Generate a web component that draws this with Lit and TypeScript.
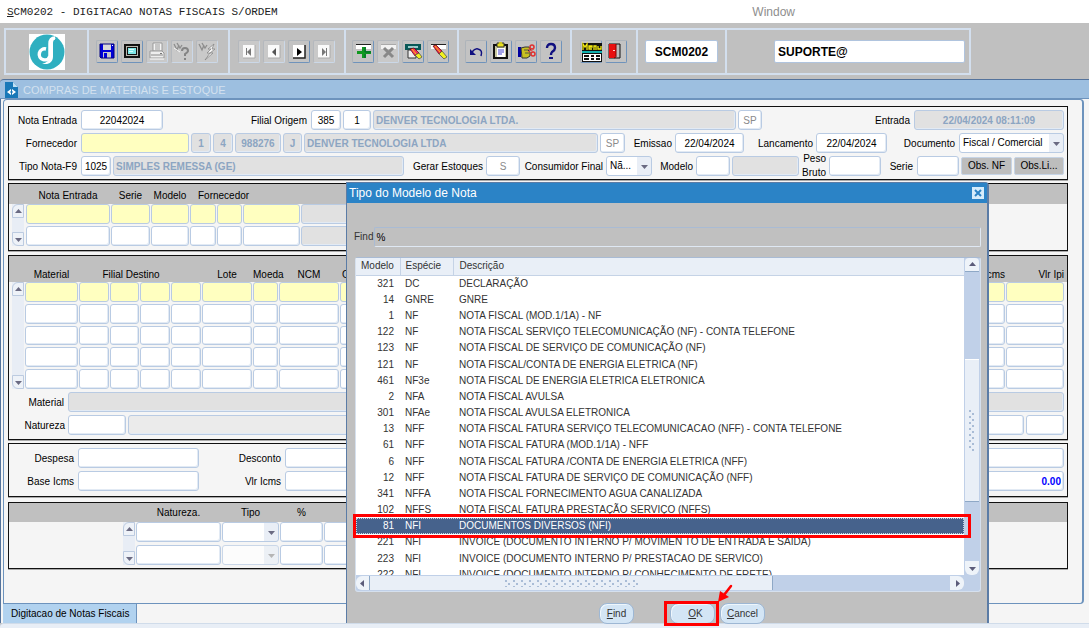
import { LitElement, html, svg, css, nothing, TemplateResult } from "lit";
import { customElement, property } from "lit/decorators.js";
import { classMap } from "lit/directives/class-map.js";

const icons: Record<string, TemplateResult> = {
  save: svg`<path d="M4 4h14v14H5l-1-1z" fill="#0000d8"/><path d="M7 4h8v6H7z" fill="#d8d8d8"/><path d="M16 5h1v1h-1z" fill="#fff"/><path d="M7 12h8v6H7z" fill="#c8c8c8"/><path d="M8 13h3v5H8z" fill="#0000d8"/><path d="M4 4h14v14H5l-1-1z" fill="none" stroke="#000080"/>`,
  screen: svg`<path d="M3 4h16v14H3z" fill="#111"/><path d="M5 6h12v10H5z" fill="#b8b8b0"/><path d="M6 7h10v8H6z" fill="#111"/><path d="M7 8h8v6H7z" fill="#7fe6e6"/><path d="M8 9h5v1H8zM8 11h4v1H8z" fill="#d8ffff"/>`,
  print: svg`<path d="M7 3h9v8H7z" fill="#f4f4f4" stroke="#999"/><path d="M9 5h5M9 7h5M9 9h5" stroke="#999"/><path d="M4 11h12l2 2v5H4z" fill="#eee" stroke="#999"/><path d="M5 15h12" stroke="#888"/><path d="M14 13h2v1h-2z" fill="#777"/><path d="M4 19h14" stroke="#fff"/>`,
  query: svg`<path d="M3 4l3 6 2-5M6 3l3 5 2-3" fill="none" stroke="#8d8d8d" stroke-width="1.3"/><path d="M3 8l6 4" stroke="#f6f6f6"/><path d="M11 11q0-3 3-3t3 3q0 1-3 3v2M14 18v2" fill="none" stroke="#858585" stroke-width="2"/>`,
  flash: svg`<path d="M3 4l3 6 2-5M6 3l3 5 2-3" fill="none" stroke="#8d8d8d" stroke-width="1.3"/><path d="M18 4l-6 5h3l-4 4h3l-5 7 8-7h-3l5-4h-3z" fill="#f4f4f4" stroke="#888" stroke-width=".8"/>`,
  first: svg`<path d="M5 5h12v13H5z" fill="#fafafa"/><path d="M5 18h12V5" fill="none" stroke="#aaa"/><path d="M8.500 8v7" stroke="#777"/><path d="M13 8v8l-4-4z" fill="#777"/>`,
  prev: svg`<path d="M5 5h12v13H5z" fill="#fafafa"/><path d="M5 18h12V5" fill="none" stroke="#aaa"/><path d="M13 8v8l-4-4z" fill="#555"/>`,
  next: svg`<path d="M5 5h12v13H5z" fill="#fff"/><path d="M5 18h12V5" fill="none" stroke="#222" stroke-width="1.5"/><path d="M9 8v8l5-4z" fill="#000"/>`,
  last: svg`<path d="M5 5h12v13H5z" fill="#fafafa"/><path d="M5 18h12V5" fill="none" stroke="#aaa"/><path d="M13.500 8v8" stroke="#777"/><path d="M9 8v8l4-4z" fill="#777"/>`,
  add: svg`<path d="M4 4h15v5H4z" fill="#fff"/><path d="M4 4h15v1H4z" fill="#222"/><path d="M10 7h4v4h5v3h-5v4h-4v-4H5v-3h5z" fill="#109820"/><path d="M13 7v5h6M13 14v4" fill="none" stroke="#063"/>`,
  remove: svg`<path d="M4 4h15v5H4z" fill="#f2f2f2"/><path d="M4 4h15v1H4z" fill="#aaa"/><path d="M7 8l9 9M16 8l-9 9" stroke="#888" stroke-width="3"/>`,
  clearquery: svg`<path d="M3 4h16v6H3z" fill="#075858"/><path d="M6 6h10v2H6z" fill="#9cc"/><path d="M6 10h8v8H6z" fill="#eee" stroke="#333"/><path d="M8 9l4-1 5 5-4 3z" fill="#f03060" stroke="#600" stroke-width=".7"/><path d="M10 9l4 5" stroke="#fc0"/><path d="M13 15l4-2 3 4-3 2z" fill="#f0f020" stroke="#444" stroke-width=".7"/>`,
  clear: svg`<path d="M4 4h15v5H4z" fill="#fff"/><path d="M4 4h15v1H4z" fill="#222"/><path d="M6 6l3-1 6 6-3 3z" fill="#e82850" stroke="#600" stroke-width=".7"/><path d="M8 6l5 6" stroke="#fc0"/><path d="M12 14l3-3 5 6-3 2z" fill="#f0f020" stroke="#444" stroke-width=".7"/>`,
  undo: svg`<path d="M7 12q3-4 6-3 5 1 3 7" fill="none" stroke="#101080" stroke-width="1.5"/><path d="M5 9v6h6z" fill="#101080"/>`,
  clip: svg`<path d="M4 5h13v13H4z" fill="#c8c8a0" stroke="#111" stroke-width="2"/><path d="M7 8h8v9H7z" fill="#fff"/><path d="M8 10h6M8 12h6M8 14h4" stroke="#4444d0"/><path d="M7 3h7v4H7z" fill="#e8e020" stroke="#333"/><path d="M9 2h3v2H9z" fill="#d0c820"/>`,
  hand: svg`<path d="M3 7h3v10H3z" fill="#0000a0"/><path d="M6 8l4-1h4l2 3h-3l2 2v4l-3 2H7z" fill="#c8c020" stroke="#333"/><path d="M9 10h4M10 13h4" stroke="#554"/><circle cx="17" cy="7" r="2" fill="none" stroke="#e03030" stroke-width="1.5"/><circle cx="18" cy="14" r="2" fill="none" stroke="#e03030" stroke-width="1.5"/><path d="M13 9l6 3M13 12l6-3" stroke="#e05050"/>`,
  help: svg`<path d="M7 8q0-4 4-4t4 4q0 2-3 4-1 1-1 3" fill="none" stroke="#101080" stroke-width="2.4"/><path d="M9 17h4v2H9z" fill="#101080"/>`,
  menu: svg`<path d="M2 10h20v12H2z" fill="#111"/><path d="M2 11h20v2H2z" fill="#10b0b0"/><path d="M3 14h18v7H3z" fill="#fff"/><path d="M4 16h5M11 16h3M16 16h4M4 19h5M11 19h3M16 19h4" stroke="#111" stroke-width="2"/><path d="M2 3h20v7H2z" fill="#111"/><path d="M3 10V4l2 3 2-3v6M12 9H9V6h3v1H9M14 10V6h2v4M18 6v3h3V6" fill="none" stroke="#f4ec10" stroke-width="1.3"/>`,
  exit: svg`<path d="M4 4h11v14H4z" fill="#bbb" stroke="#111"/><path d="M4 4h7v12l-2 2H4z" fill="#e81010"/><path d="M11 4v13l-2 1" fill="none" stroke="#800"/><path d="M8 10h2v1H8z" fill="#fcc"/>`,
};

@customElement("tool-button")
export class ToolButton extends LitElement {
  @property() icon = "";
  @property() label = "";
  @property({ type: Boolean }) off = false;

  static styles = css`
    :host { display: block; width: 22px; height: 23px; }
    button {
      display: block; box-sizing: border-box; width: 22px; height: 23px; padding: 0; margin: 0;
      background: #c3c3c3; border: 1px solid;
      border-color: #aeb4ba #6f93bb #6f93bb #aeb4ba; border-radius: 2px;
    }
    button.off { border-color: #b4b8bd #cbd8e8 #cbd8e8 #b4b8bd; background: #c9c9c9; }
    svg { display: block; width: 22px; height: 23px; margin: -1px; }
  `;

  render() {
    return html`<button class=${classMap({ off: this.off })} ?disabled=${this.off} aria-label=${this.label}>
      <svg viewBox="0 0 22 23" aria-hidden="true">${icons[this.icon]}</svg>
    </button>`;
  }
}

type Tool = [string, string, boolean?];
const toolGroups: { cls: string; tools: Tool[] }[] = [
  { cls: "file", tools: [["save", "Salvar"], ["screen", "Tela"], ["print", "Imprimir", true], ["query", "Consultar", true], ["flash", "Executar consulta", true]] },
  { cls: "nav", tools: [["first", "Primeiro", true], ["prev", "Anterior", true], ["next", "Proximo"], ["last", "Ultimo", true]] },
  { cls: "", tools: [["add", "Inserir"], ["remove", "Excluir", true], ["clearquery", "Limpar bloco"], ["clear", "Limpar registro"]] },
  { cls: "", tools: [["undo", "Desfazer"], ["clip", "Lista"], ["hand", "Editar"], ["help", "Ajuda"]] },
  { cls: "nav", tools: [["menu", "Menu"], ["exit", "Sair"]] },
];

const models: [string, string, string][] = [
  ["321", "DC", "DECLARAÇÃO"],
  ["14", "GNRE", "GNRE"],
  ["1", "NF", "NOTA FISCAL (MOD.1/1A) - NF"],
  ["122", "NF", "NOTA FISCAL SERVIÇO TELECOMUNICAÇÃO (NF) - CONTA TELEFONE"],
  ["123", "NF", "NOTA FISCAL DE SERVIÇO DE COMUNICAÇÃO (NF)"],
  ["121", "NF", "NOTA FISCAL/CONTA DE ENERGIA ELETRICA (NF)"],
  ["461", "NF3e", "NOTA FISCAL DE ENERGIA ELETRICA ELETRONICA"],
  ["2", "NFA", "NOTA FISCAL AVULSA"],
  ["301", "NFAe", "NOTA FISCAL AVULSA ELETRONICA"],
  ["13", "NFF", "NOTA FISCAL FATURA SERVIÇO TELECOMUNICACAO (NFF) - CONTA TELEFONE"],
  ["61", "NFF", "NOTA FISCAL FATURA (MOD.1/1A) - NFF"],
  ["6", "NFF", "NOTA FISCAL FATURA /CONTA DE ENERGIA ELETRICA (NFF)"],
  ["12", "NFF", "NOTA FISCAL FATURA DE SERVIÇO DE COMUNICAÇÃO (NFF)"],
  ["341", "NFFA", "NOTA FISCAL FORNECIMENTO AGUA CANALIZADA"],
  ["102", "NFFS", "NOTA FISCAL FATURA PRESTAÇÃO SERVIÇO (NFFS)"],
  ["81", "NFI", "DOCUMENTOS DIVERSOS (NFI)"],
  ["221", "NFI", "INVOICE (DOCUMENTO INTERNO P/ MOVIMEN TO DE ENTRADA E SAIDA)"],
  ["223", "NFI", "INVOICE (DOCUMENTO INTERNO P/ PRESTACAO DE SERVICO)"],
  ["222", "NFI", "INVOICE (DOCUMENTO INTERNO P/ CONHECIMENTO DE FRETE)"],
];

const arrow = (dir: "up" | "down" | "left" | "right") => {
  const d = { up: "M1 6h7L4.500 2z", down: "M1 3h7L4.500 7z", left: "M6 1v7L2 4.500z", right: "M3 1v7L7 4.500z" }[dir];
  return html`<svg class="arrow" viewBox="0 0 9 9" aria-hidden="true"><path d=${d} fill="currentColor" /></svg>`;
};

@customElement("app-root")
export class AppRoot extends LitElement {
  static styles = css`
    * { box-sizing: border-box; }
    :host {
      display: flex; flex-direction: column; min-height: 100vh; overflow: hidden;
      font: 10px/14px "Liberation Sans", Arial, sans-serif; color: #000; background: #c0c0c0;
    }
    input, select, button { font: inherit; color: inherit; margin: 0; min-width: 0; }

    .menubar { display: flex; justify-content: space-between; height: 23px; padding: 0 294px 0 7px; background: #fff; line-height: 24px; flex: none; }
    .menubar .name { font-family: "Liberation Mono", monospace; font-size: 11px; color: #222; }
    .menubar .window { font-size: 12px; color: #8e8e8e; }

    .toolbar { flex: none; height: 56px; padding: 5px 4px 4px; }
    .groups { display: inline-flex; height: 47px; border: 2px solid #d3dfee; }
    .group { display: flex; align-items: center; justify-content: center; gap: 3px; padding: 0 8px 0 6px; border-left: 2px solid #d3dfee; }
    .group.brand { border-left: 0; width: 81px; padding: 0; }
    .brand svg { width: 36px; height: 36px; display: block; }
    .group.file { padding: 0 10px 0 7px; }
    .group.nav { padding: 0 9px 0 8px; }
    .group.program { padding: 0 7px; }
    .group.user { width: 244px; justify-content: flex-end; padding: 0 4px; }
    .group input { height: 23px; border: 1px solid #b0c4de; border-radius: 2px; font-size: 12px; font-weight: bold; background: #fff; padding: 0 3px; }
    .group .code { width: 73px; text-align: center; }
    .group .login { width: 191px; }

    .titlebar { flex: none; display: flex; align-items: center; gap: 5px; height: 20px; padding: 2px 5px 0; background: #9dbfe0; border-top: 1px solid #54739c; border-bottom: 1px solid #6d93bd; border-top-left-radius: 4px; color: #d3e1ef; font-size: 11px; }
    .titlebar svg { width: 13px; height: 16px; }

    .work { position: relative; flex: 1; display: flex; flex-direction: column; background: #f5f5f5; border-left: 1px solid #54739c; padding: 0 5px 0 2px; }
    .canvas { flex: 1; display: flex; flex-direction: column; border: 1px solid #6d93bd; border-width: 1px 2px 1px 1px; border-radius: 4px 4px 4px 0; padding: 6px 14px 0 4px; }
    .panel { border: 1px solid #111; background: #f5f5f5; box-shadow: 0 1px 0 #aaa; }
    .panel.note { padding: 3px 3px 2px 0; height: 74px; }
    .panel.invoices { margin-top: 3px; height: 68px; }
    .panel.items { margin-top: 4px; height: 185px; }
    .panel.totals { margin-top: 3px; height: 54px; padding: 4px 3px 0 0; }
    .panel.natures { margin-top: 5px; height: 67px; }

    .row { display: grid; column-gap: 2px; height: 20px; margin-bottom: 3px; }
    .row label { text-align: right; padding-right: 2px; line-height: 21px; white-space: nowrap; }
    .row .tight { padding-right: 1px; }
    .row .two { white-space: normal; line-height: 14px; margin: -4px 0; }
    .r1 { grid-template-columns: 70px 82px 144px 30px 28px 1fr 24px 148px 150px; }
    .r2 { grid-template-columns: 70px 108px 20px 20px 46px 19px 1fr 25px 46px 69px 68px 71px 68px 105px; }
    .r3 { grid-template-columns: 70px 30px 1fr 78px 34px 82px 46px 40px 34px 67px 26px 52px 32px 42px 51px 50px; }
    .r4 { grid-template-columns: 57px 1fr; padding-right: 3px; margin-top: 3px; }
    .r5 { grid-template-columns: 57px 58px 3fr 2fr 38px; padding-right: 3px; }
    .r6 { grid-template-columns: 67px 121px 82px 150px 1fr 150px; }

    .f { width: 100%; height: 20px; border: 1px solid #b9cbe3; border-radius: 3px; background: #fff; padding: 0 2px; outline: 0; box-shadow: inset -1px -1px 0 #e2eaf4; text-overflow: ellipsis; }
    .f.c { text-align: center; }
    .f.y { background: #ffffc0; box-shadow: none; }
    .f.g { background: #e1e1e1; color: #8ca5c2; font-weight: bold; }
    .f.l { background: #ebebeb; }
    .f.dim { color: #8a8a8a; text-align: center; }
    .f.money { text-align: right; color: #00f; font-weight: bold; }
    .sel { position: relative; display: block; width: 100%; height: 20px; }
    .sel select { appearance: none; width: 100%; height: 20px; border: 1px solid #b9cbe3; border-radius: 3px; background: linear-gradient(#e9eef6, #e9eef6) right / 14px 100% no-repeat #fff; padding: 0 14px 0 3px; }
    .sel .arrow { position: absolute; right: 3px; top: 6px; pointer-events: none; color: #6a6a82; }
    .sel.off .arrow { color: #b5b5b5; }
    .arrow { width: 9px; height: 9px; display: block; }
    .btn { height: 18px; margin-top: 1px; padding: 0; background: #bdbdbd; border: 1px solid #c6d4e6; border-radius: 2px; }

    .head { background: #c0c0c0; display: grid; column-gap: 1px; align-items: end; text-align: center; white-space: nowrap; }
    .invoices .head, .invoices .cells { grid-template-columns: 84px 39px 38px 26px 25px 57px 1fr; }
    .invoices .head { height: 20px; padding: 0 100px 1px 17px; }
    .invoices .owner { grid-column: 4 / 7; text-align: left; padding-left: 8px; }
    .block { display: flex; gap: 2px; padding: 0 3px; }
    .cells { flex: 1; display: grid; column-gap: 1px; row-gap: 2px; }
    .invoices .block { height: 42px; padding-right: 100px; }
    .items .head, .items .cells { grid-template-columns: 53px 30px 29px 30px 30px 50px 25px 60px repeat(10, 1fr) 58px; }
    .items .head { height: 26px; padding: 0 3px 0 16px; }
    .items .branch { grid-column: 2 / 6; padding-right: 18px; }
    .items .left { text-align: left; padding-left: 2px; }
    .items .right { text-align: right; }
    .items .block { height: 107px; gap: 1px; }
    .items .cells .f { height: 100%; }
    .items .cells { grid-template-rows: repeat(5, 1fr); }
    .natures .head, .natures .cells { grid-template-columns: 85px 57px 43px 1fr; }
    .natures .head { height: 19px; padding: 0 100px 2px 127px; }
    .natures .block { height: 43px; padding-left: 114px; padding-right: 100px; gap: 1px; }

    .vbar { flex: none; width: 12px; display: flex; flex-direction: column; justify-content: space-between; background: #e8edf5; }
    .vbar button { display: grid; place-items: center; width: 12px; height: 14px; padding: 0; border: 1px solid #bccbe0; background: #eef2f8; color: #6a6a82; }
    .vbar button:first-child { border-radius: 6px 0 0 0; }
    .vbar button:last-child { border-radius: 0 0 0 6px; }

    .tabs { flex: none; height: 19px; display: flex; }
    .tab { padding: 0 7px 0 8px; height: 19px; border: 0; border-right: 1px solid #6d93bd; background: #b1d2ef; white-space: nowrap; }
    .status { flex: none; height: 5px; background: #e8eef6; border-top: 1px solid #d0dcea; border-radius: 4px 0 0 0; }

    .dialog { position: absolute; left: 345px; top: 83px; bottom: 0; width: 643px; display: flex; flex-direction: column; background: #c0c0c0; border: 1px solid #5b7ca6; border-width: 1px 2px 0 1px; border-radius: 0 4px 0 0; color: #333; }
    .caption { flex: none; display: flex; align-items: center; justify-content: space-between; height: 20px; padding: 0 3px 0 2px; background: #2b83c6; color: #fff; font-size: 12px; }
    .close { width: 12px; height: 12px; padding: 0; border: 0; background: #d6ecfb; display: block; }
    .close svg { display: block; width: 12px; height: 12px; }
    .find { display: flex; align-items: center; margin: 24px 6px 0 7px; gap: 1px; }
    .find input { flex: 1; height: 20px; border: 1px solid #a9bbd4; border-bottom-color: #dfe8f3; border-right-color: #dfe8f3; border-radius: 2px; background: #c0c0c0; padding: 0 1px; color: #000; }
    .list { position: relative; margin: 10px 6px 0 8px; height: 335px; display: grid; grid-template: 1fr 16px / 1fr 16px; border: 1px solid #d5e0ee; border-top-color: #a9bbd4; border-radius: 3px; background: #c0d0e8; }
    .view { overflow: hidden; background: #fff; }
    table { border-collapse: collapse; width: 100%; height: 325px; table-layout: fixed; }
    th, td { padding: 0; font-weight: normal; text-align: left; white-space: nowrap; line-height: 14px; }
    th { height: 17px; background: #e9eff7; border-right: 1px solid #c5d3e6; border-bottom: 1px solid #c5d3e6; padding-left: 5px; }
    th:last-child { border-right: 0; }
    .cm { width: 44px; }
    .ce { width: 53px; }
    td.n { text-align: right; padding-right: 6px; }
    td.s { padding-left: 5px; }
    td.d, th.d { padding-left: 6px; }
    tr.on { background: #46628c; color: #fff; outline: 1px dotted #c8d4e4; outline-offset: -1px; }
    .vs, .hs { display: flex; justify-content: space-between; }
    .vs { flex-direction: column; padding: 0 1px; }
    .vs .gap { flex: 88; }
    .vs .thumb { flex: 142; border-bottom: 1px solid #8ea8c6; border-top: 1px solid #fff; }
    .vs .rest { flex: 60; }
    .hs { padding: 1px 0; }
    .hs .thumb { flex: 403; border-right: 1px solid #8ea8c6; }
    .hs .rest { flex: 178; }
    .thumb { background: #e9eff7; display: grid; place-items: center; }
    .grip { background: radial-gradient(circle at 2px 2px, #a9bcd6 1px, transparent 1px) 0 0 / 8px 6px, radial-gradient(circle at 5px 5px, #a9bcd6 1px, transparent 1px) 0 0 / 8px 6px; }
    .vs .grip { width: 8px; height: 42px; }
    .hs .grip { width: 134px; height: 8px; }
    .list .sb { flex: none; display: grid; place-items: center; width: 14px; height: 14px; padding: 0; border: 0; border-bottom: 1px solid #8ea8c6; background: #eef3f9; color: #5c5c7a; border-radius: 4px 4px 0 0; }
    .list .sb.dn { border-bottom: 0; border-radius: 0 0 6px 6px; }
    .list .sb.lf { border-bottom: 0; border-right: 1px solid #8ea8c6; border-radius: 6px 0 0 6px; }
    .list .sb.rt { border-bottom: 0; border-radius: 0 6px 6px 0; }
    .mark { position: absolute; border: 3px solid #f00; pointer-events: none; }
    .list .mark { left: -3px; right: 9px; top: 256px; height: 24px; }
    .actions { display: flex; margin-top: 11px; padding-left: 252px; }
    .actions button { height: 21px; padding: 0; border: 1px solid #9db7d4; border-radius: 8px; background: #d3e5f5; box-shadow: inset 1px 1px 0 #eef6fc; }
    .b1 { width: 35px; }
    .ok { position: relative; margin: 0 5px 0 36px; }
    .ok button { width: 45px; padding-left: 6px; }
    .ok .mark { left: -6px; top: -2px; width: 55px; height: 25px; }
    .ok .pointer { position: absolute; left: 46px; top: -20px; width: 20px; height: 20px; pointer-events: none; }
    .b3 { width: 45px; }
  `;

  private field(cls: string, value = "", id = "", name = "Campo") {
    return html`<input class="f ${cls}" id=${id || nothing} aria-label=${id ? nothing : name} .value=${value} ?readonly=${cls.includes("g")} />`;
  }

  private select(text: string, id: string, name: string, off = false) {
    return html`<span class="sel ${off ? "off" : ""}"><select id=${id || nothing} aria-label=${id ? nothing : name} ?disabled=${off}><option>${text}</option></select>${arrow("down")}</span>`;
  }

  private vbar() {
    return html`<div class="vbar"><button aria-label="Subir">${arrow("up")}</button><button aria-label="Descer">${arrow("down")}</button></div>`;
  }

  private cells(rows: number, cols: string[]) {
    return html`<div class="cells">${Array.from({ length: rows }, (_, r) =>
      cols.map((c, i) => this.field(c || (r === 0 ? "y" : ""), "", "", `Linha ${r + 1} coluna ${i + 1}`)))}</div>`;
  }

  private toolbar() {
    return html`<div class="toolbar"><div class="groups">
      <div class="group brand"><svg viewBox="0 0 36 36" role="img" aria-label="Logo">
        <path d="M0 0h36v36H0z" fill="#fff" /><circle cx="18" cy="18" r="17.500" fill="#2fafc0" />
        <path d="M26 4c-4 0-5 2-5 6v12a5.500 5.500 0 1 1-4-7" fill="none" stroke="#fff" stroke-width="3.500" />
        <path d="M20 20c1 5-1 9-7 9.500 6 2 11-1 11-7V9c0-2 1-4 3-5-4-1-6 1-6 5z" fill="#fff" />
      </svg></div>
      ${toolGroups.map((g) => html`<div class="group ${g.cls}">
        ${g.tools.map(([icon, label, off]) => html`<tool-button .icon=${icon} .label=${label} .off=${!!off}></tool-button>`)}
      </div>`)}
      <div class="group program"><input class="code" aria-label="Programa" .value=${"SCM0202"} /></div>
      <div class="group user"><input class="login" aria-label="Usuario" .value=${"SUPORTE@"} /></div>
    </div></div>`;
  }

  private note() {
    return html`<section class="panel note">
      <div class="row r1">
        <label for="nota">Nota Entrada</label>${this.field("c", "22042024", "nota")}
        <label for="filial">Filial Origem</label>${this.field("c", "385", "filial")}
        ${this.field("c", "1")}${this.field("g", "DENVER TECNOLOGIA LTDA.")}${this.field("dim", "SP")}
        <label for="entrada">Entrada</label>${this.field("g c", "22/04/2024 08:11:09", "entrada")}
      </div>
      <div class="row r2">
        <label for="forn">Fornecedor</label>${this.field("y", "", "forn")}
        ${this.field("g c", "1")}${this.field("g c", "4")}${this.field("g c", "988276")}${this.field("g c", "J")}
        ${this.field("g", "DENVER TECNOLOGIA LTDA")}${this.field("dim", "SP")}
        <label class="tight" for="emi">Emissao</label>${this.field("c", "22/04/2024", "emi")}
        <label class="tight" for="lan">Lancamento</label>${this.field("c", "22/04/2024", "lan")}
        <label for="doc">Documento</label>${this.select("Fiscal / Comercial", "doc", "")}
      </div>
      <div class="row r3">
        <label for="tipo">Tipo Nota-F9</label>${this.field("c", "1025", "tipo")}${this.field("g", "SIMPLES REMESSA (GE)")}
        <label class="tight" for="ger">Gerar Estoques</label>${this.field("dim", "S", "ger")}
        <label class="tight" for="cons">Consumidor Final</label>${this.select("Nã...", "cons", "")}
        <label class="tight" for="mod">Modelo</label>${this.field("", "", "mod")}${this.field("g")}
        <label class="tight two" for="peso">Peso Bruto</label>${this.field("", "", "peso")}
        <label for="serie">Serie</label>${this.field("", "", "serie")}
        <button class="btn">Obs. NF</button><button class="btn">Obs.Li...</button>
      </div>
    </section>`;
  }

  private dialog() {
    return html`<div class="dialog" role="dialog" aria-label="Tipo do Modelo de Nota">
      <div class="caption"><span>Tipo do Modelo de Nota</span>
        <button class="close" aria-label="Fechar"><svg viewBox="0 0 12 12"><path d="M3 3l6 6M9 3L3 9" stroke="#2b83c6" stroke-width="2" /></svg></button></div>
      <div class="find"><label for="find">Find</label><input id="find" .value=${"%"} /></div>
      <div class="list">
        <div class="view"><table>
          <colgroup><col class="cm" /><col class="ce" /><col /></colgroup>
          <thead><tr><th>Modelo</th><th>Espécie</th><th class="d">Descrição</th></tr></thead>
          <tbody>${models.map(([n, s, d]) => html`<tr class=${classMap({ on: n === "81" })}><td class="n">${n}</td><td class="s">${s}</td><td class="d">${d}</td></tr>`)}</tbody>
        </table></div>
        <div class="vs"><button class="sb" aria-label="Subir">${arrow("up")}</button><div class="gap"></div><div class="thumb"><div class="grip"></div></div><div class="rest"></div><button class="sb dn" aria-label="Descer">${arrow("down")}</button></div>
        <div class="hs"><button class="sb lf" aria-label="Esquerda">${arrow("left")}</button><div class="thumb"><div class="grip"></div></div><div class="rest"></div><button class="sb rt" aria-label="Direita">${arrow("right")}</button></div>
        <div class="mark"></div>
      </div>
      <div class="actions">
        <button class="b1"><u>F</u>ind</button>
        <div class="ok"><button><u>O</u>K</button><div class="mark"></div>
          <svg class="pointer" viewBox="0 0 20 20" aria-hidden="true"><path d="M15 3L8 12" stroke="#f00" stroke-width="2.500" stroke-linecap="round" /><path d="M2 19L4 8l9 6z" fill="#f00" /></svg></div>
        <button class="b3"><u>C</u>ancel</button>
      </div>
    </div>`;
  }

  render() {
    return html`
      <header class="menubar"><span class="name"><u>S</u>CM0202 - DIGITACAO NOTAS FISCAIS S/ORDEM</span><span class="window">Window</span></header>
      ${this.toolbar()}
      <div class="titlebar"><svg viewBox="0 0 13 16" aria-hidden="true"><path d="M0 0h8l5 5v11H0z" fill="#1878b8" /><path d="M8 0v5h5z" fill="#bfe0f4" /><path d="M6 7l-4 3 4 3zM7 7l4 3-4 3z" fill="#fff" /><path d="M5 10h3" stroke="#1878b8" /></svg><span>COMPRAS DE MATERIAIS E ESTOQUE</span></div>
      <main class="work">
        <div class="canvas">
          ${this.note()}
          <section class="panel invoices">
            <div class="head"><span>Nota Entrada</span><span>Serie</span><span>Modelo</span><span class="owner">Fornecedor</span></div>
            <div class="block">${this.vbar()}${this.cells(2, ["", "", "", "", "", "", "g"])}</div>
          </section>
          <section class="panel items">
            <div class="head"><span>Material</span><span class="branch">Filial Destino</span><span>Lote</span><span>Moeda</span><span>NCM</span><span class="left">CFOP</span>
              ${Array.from({ length: 8 }, () => html`<span></span>`)}<span class="right">Vlr Icms</span><span class="right">Vlr Ipi</span></div>
            <div class="block">${this.vbar()}${this.cells(5, Array(19).fill(""))}</div>
            <div class="row r4"><label for="mat">Material</label>${this.field("g", "", "mat")}</div>
            <div class="row r5"><label class="tight" for="nat">Natureza</label>${this.field("", "", "nat")}${this.field("l")}${this.field("")}${this.field("")}</div>
          </section>
          <section class="panel totals">
            <div class="row r6"><label for="desp">Despesa</label>${this.field("", "", "desp")}<label for="desc">Desconto</label>${this.field("", "", "desc")}<span></span>${this.field("")}</div>
            <div class="row r6"><label for="base">Base Icms</label>${this.field("", "", "base")}<label for="vlr">Vlr Icms</label>${this.field("", "", "vlr")}<span></span>${this.field("money", "0.00")}</div>
          </section>
          <section class="panel natures">
            <div class="head"><span>Natureza.</span><span>Tipo</span><span>%</span></div>
            <div class="block">${this.vbar()}<div class="cells">
              ${[false, true].map((off) => html`${this.field("", "", "", "Natureza")}${this.select("", "", "Tipo", off)}${this.field("", "", "", "Percentual")}${this.field("")}`)}
            </div></div>
          </section>
        </div>
        <div class="tabs"><button class="tab">Digitacao de Notas Fiscais</button></div>
        ${this.dialog()}
      </main>
      <footer class="status"></footer>`;
  }
}
